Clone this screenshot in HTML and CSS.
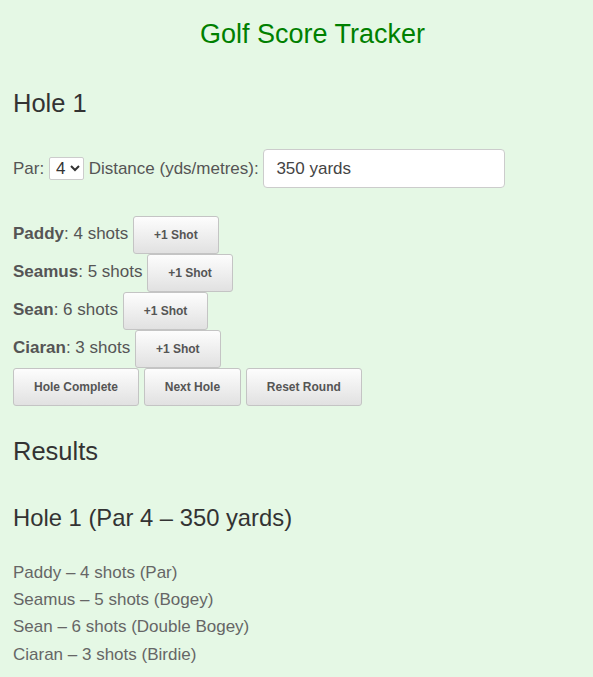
FILE: index.html
```html
<!DOCTYPE html>
<html lang="en">
<head>
<meta charset="utf-8">
<title>Golf Score Tracker</title>
<link rel="stylesheet" href="styles.css">
</head>
<body>
<h1 class="title">Golf Score Tracker</h1>

<h2 class="hole-heading">Hole 1</h2>

<div class="setup">Par: <select class="par-select"><option>3</option><option selected>4</option><option>5</option></select> Distance (yds/metres): <input class="distance" type="text" value="350 yards"></div>

<div class="players">
  <div class="player"><strong>Paddy</strong>: 4 shots <button class="btn">+1 Shot</button></div>
  <div class="player"><strong>Seamus</strong>: 5 shots <button class="btn">+1 Shot</button></div>
  <div class="player"><strong>Sean</strong>: 6 shots <button class="btn">+1 Shot</button></div>
  <div class="player"><strong>Ciaran</strong>: 3 shots <button class="btn">+1 Shot</button></div>
  <div class="actions"><button class="btn">Hole Complete</button> <button class="btn">Next Hole</button> <button class="btn">Reset Round</button></div>
</div>

<h2 class="results-heading">Results</h2>
<h3 class="result-hole">Hole 1 (Par 4 – 350 yards)</h3>
<ul class="result-list">
  <li>Paddy – 4 shots (Par)</li>
  <li>Seamus – 5 shots (Bogey)</li>
  <li>Sean – 6 shots (Double Bogey)</li>
  <li>Ciaran – 3 shots (Birdie)</li>
</ul>
</body>
</html>
```
FILE: styles.css
```css
html { background: #e5f8e5; }
body {
  margin: 0;
  padding: 0 13px;
  font-family: "Liberation Sans", Arial, sans-serif;
  font-size: 17px;
  color: #555;
  background: #e5f8e5;
}
.title {
  margin: 18px 0 0;
  padding-left: 32px;
  font-size: 27px;
  line-height: 32px;
  font-weight: normal;
  color: #008000;
  text-align: center;
}
.hole-heading {
  margin: 37.5px 0 0;
  font-size: 25.5px;
  line-height: 30px;
  font-weight: normal;
  color: #333;
}
.setup {
  margin-top: 31.5px;
  color: #555;
}
.par-select {
  box-sizing: border-box;
  width: 35px;
  font-family: "Liberation Sans", Arial, sans-serif;
  font-size: 17px;
  color: #333;
  background: #fff;
  border: 1px solid #ccc;
  border-radius: 2px;
  height: 23px;
  padding: 0 0 0 2px;
  vertical-align: baseline;
}
.distance {
  box-sizing: border-box;
  width: 242px;
  height: 39px;
  padding: 0 12px;
  font-family: "Liberation Sans", Arial, sans-serif;
  font-size: 17px;
  color: #444;
  background: #fff;
  border: 1px solid #ccc;
  border-radius: 4px;
  vertical-align: baseline;
}
.players { margin-top: 28px; }
.player strong { font-weight: bold; color: #555; }
.btn {
  box-sizing: border-box;
  height: 38px;
  padding: 11px 20px;
  font-family: "Liberation Sans", Arial, sans-serif;
  font-size: 12px;
  line-height: 14px;
  font-weight: bold;
  color: #555;
  background: linear-gradient(#fdfdfd, #e1e1e1);
  border: 1px solid #c4c4c4;
  border-radius: 3px;
  vertical-align: baseline;
  margin: 0;
}
.results-heading {
  margin: 29.5px 0 0;
  font-size: 25.5px;
  line-height: 30px;
  font-weight: normal;
  color: #333;
}
.result-hole {
  margin: 38px 0 0;
  font-size: 23.8px;
  line-height: 28px;
  font-weight: normal;
  color: #333;
}
.result-list {
  list-style: none;
  margin: 27.3px 0 0;
  padding: 0;
  line-height: 27.3px;
  color: #666;
}
```
